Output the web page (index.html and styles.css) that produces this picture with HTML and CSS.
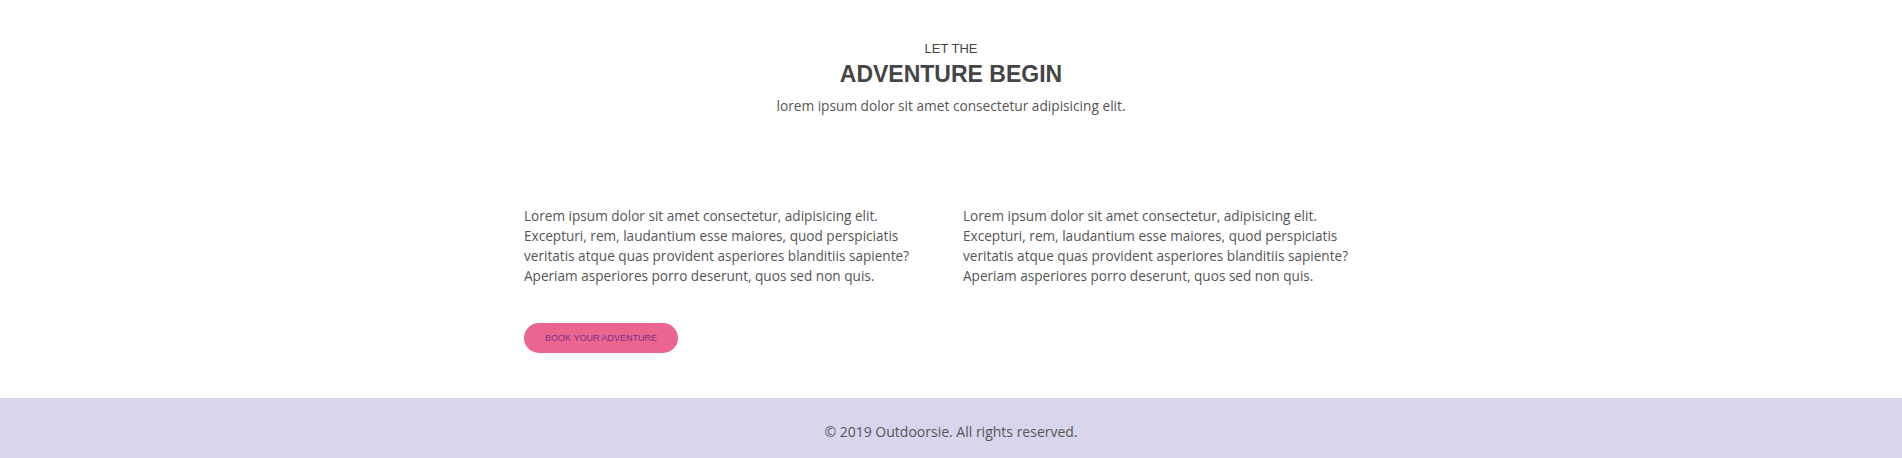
FILE: index.html
```html
<!DOCTYPE html>
<html>
<head>
<meta charset="utf-8">
<link rel="stylesheet" href="styles.css">
</head>
<body>
<section class="intro">
  <div class="intro-kicker">LET THE</div>
  <h2 class="intro-title">ADVENTURE BEGIN</h2>
  <p class="intro-sub">lorem ipsum dolor sit amet consectetur adipisicing elit.</p>
</section>
<section class="content">
  <div class="cols">
    <p class="col-text">Lorem ipsum dolor sit amet consectetur, adipisicing elit. Excepturi, rem, laudantium esse maiores, quod perspiciatis veritatis atque quas provident asperiores blanditiis sapiente? Aperiam asperiores porro deserunt, quos sed non quis.</p>
    <p class="col-text">Lorem ipsum dolor sit amet consectetur, adipisicing elit. Excepturi, rem, laudantium esse maiores, quod perspiciatis veritatis atque quas provident asperiores blanditiis sapiente? Aperiam asperiores porro deserunt, quos sed non quis.</p>
  </div>
  <a class="btn" href="#">BOOK YOUR ADVENTURE</a>
</section>
<footer class="footer">© 2019 Outdoorsie. All rights reserved.</footer>
</body>
</html>
```
FILE: styles.css
```css
html, body { margin: 0; padding: 0; }
body {
  background: #fff;
  font-family: "Open Sans", "Noto Sans", sans-serif;
  color: #555;
  width: 1902px;
  height: 458px;
  overflow: hidden;
}
.intro {
  text-align: center;
  padding-top: 41px;
}
.intro-kicker {
  font-family: "Liberation Sans", sans-serif;
  font-size: 13px;
  line-height: 16px;
  color: #444;
}
.intro-title {
  margin: 4px 0 0;
  font-family: "Liberation Sans", sans-serif;
  font-weight: bold;
  font-size: 23px;
  line-height: 26px;
  letter-spacing: 0;
  color: #454545;
}
.intro-sub {
  margin: 9px 0 0;
  font-size: 13.7px;
  line-height: 20px;
  color: #555;
}
.content {
  width: 854px;
  margin: 0 auto;
  padding-top: 90px;
}
.cols {
  display: grid;
  grid-template-columns: 439px 415px;
}
.col-text {
  margin: 0;
  font-size: 13.6px;
  line-height: 20px;
  width: 410px;
}
.btn {
  display: inline-flex;
  align-items: center;
  justify-content: center;
  margin-top: 37px;
  width: 154px;
  height: 30px;
  border-radius: 15px;
  background: #eb6590;
  color: #7b2f86;
  font-family: "Liberation Sans", sans-serif;
  font-size: 9px;
  text-decoration: none;
}
.footer {
  box-sizing: border-box;
  margin-top: 45px;
  height: 61px;
  padding-top: 5px;
  background: #d8d5ec;
  display: flex;
  align-items: center;
  justify-content: center;
  font-size: 14px;
  color: #555;
}
```
